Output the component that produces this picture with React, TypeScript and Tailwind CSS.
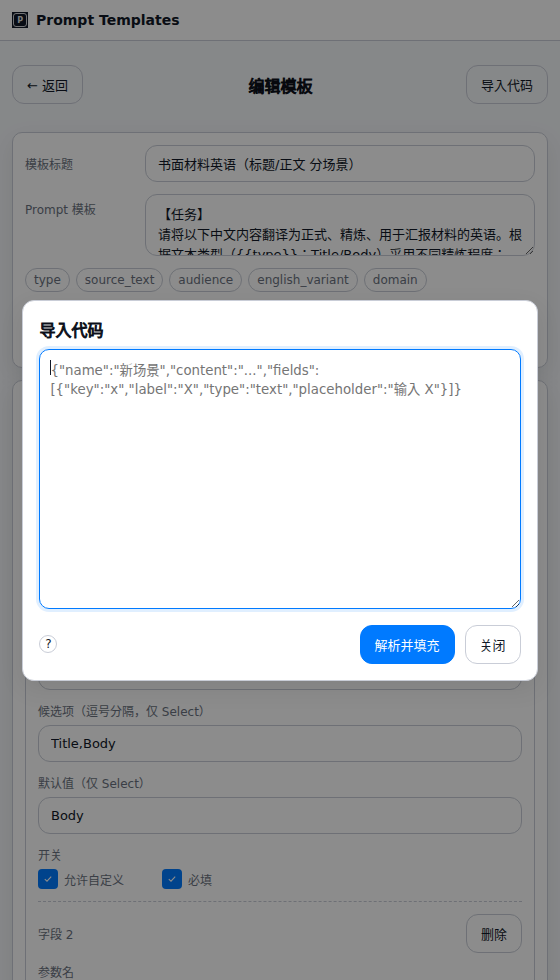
import type { ReactNode } from "react";

function Button({
  children,
  tone = "border-[#c9cdd7] text-[#111827]",
}: {
  children: ReactNode;
  tone?: string;
}) {
  return (
    <button
      className={`flex h-[39px] shrink-0 items-center justify-center whitespace-nowrap rounded-[12px] border px-[14px] pt-[3px] text-[13px] ${tone}`}
    >
      {children}
    </button>
  );
}

function Label({ children }: { children: ReactNode }) {
  return <div className="h-[17px] text-[12px] leading-[21px] text-[#6b7280]">{children}</div>;
}

function Field({ label, value }: { label: string; value: string }) {
  return (
    <div className="flex flex-col gap-1.5">
      <Label>{label}</Label>
      <input
        readOnly
        defaultValue={value}
        className="h-[37px] w-full rounded-[12px] border border-[#c9cdd7] bg-white px-3 text-[13px] outline-none"
      />
    </div>
  );
}

function Check({ label }: { label: string }) {
  return (
    <label className="flex w-[124px] items-center gap-1.5 text-[12px] text-[#6b7280]">
      <span className="flex h-5 w-5 items-center justify-center rounded-[4px] bg-[#007aff]">
        <svg width="8" height="8" viewBox="0 0 8 8" fill="none" stroke="white" strokeWidth="1.1">
          <path d="M0.8 4.2 3 6.2 7.2 1.6" />
        </svg>
      </span>
      <span className="pt-[3px]">{label}</span>
    </label>
  );
}

const chips = ["type", "source_text", "audience", "english_variant", "domain"];

export default function App() {
  return (
    <div className="relative h-[980px] w-full overflow-hidden bg-[#f5f7fa] font-['DejaVu_Sans','Noto_Sans_CJK_JP',sans-serif] text-[#111827]">
      <header className="flex h-[41px] items-center gap-2 border-b border-[#c9cdd7] bg-white px-3">
        <svg width="16" height="16" viewBox="0 0 16 16">
          <rect width="16" height="16" fill="#111827" />
          <rect x="1.5" y="1.5" width="13" height="13" rx="2.5" fill="none" stroke="white" strokeWidth="0.8" />
          <text x="8.2" y="11" textAnchor="middle" fontSize="8" fontWeight="700" fill="white" fillOpacity="0.9">P</text>
        </svg>
        <span className="text-[14px] font-bold">Prompt Templates</span>
      </header>

      <main className="flex flex-col px-3 pt-6">
        <div className="flex items-center justify-between">
          <Button>← 返回</Button>
          <h1 className="pl-[12px] pt-1 text-[16px] font-normal text-[#0b0f19] [-webkit-text-stroke:0.95px_#0b0f19]">编辑模板</h1>
          <Button>导入代码</Button>
        </div>

        <section className="mt-7 flex h-[236px] flex-col gap-3 rounded-[10px] border border-[#c9cdd7] bg-white p-3 shadow-[0_8px_24px_rgba(0,0,0,0.08)]">
          <div className="flex items-center">
            <div className="w-[120px] shrink-0 pt-0.5 text-[12px] text-[#6b7280]">模板标题</div>
            <input
              readOnly
              defaultValue="书面材料英语（标题/正文 分场景）"
              className="h-[37px] min-w-0 flex-1 rounded-[12px] border border-[#c9cdd7] px-3 text-[13px] outline-none"
            />
          </div>
          <div className="flex items-start">
            <div className="w-[120px] shrink-0 pt-[7px] text-[12px] text-[#6b7280]">Prompt 模板</div>
            <textarea
              readOnly
              defaultValue={"【任务】\n请将以下中文内容翻译为正式、精炼、用于汇报材料的英语。根据文本类型（{{type}}：Title/Body）采用不同精炼程度："}
              className="h-[62px] min-w-0 flex-1 resize-y overflow-hidden rounded-[12px] border border-[#c9cdd7] px-3 py-2.5 text-[13px] leading-5 outline-none"
            />
          </div>
          <div className="flex gap-1.5">
            {chips.map((c) => (
              <span key={c} className="flex h-6 items-center rounded-full border border-[#c9cdd7] px-2 text-[12px] text-[#6b7280]">
                {c}
              </span>
            ))}
          </div>
        </section>

        <section className="mt-3 h-[900px] shrink-0 rounded-[10px] border border-[#c9cdd7] bg-white p-3 shadow-[0_8px_24px_rgba(0,0,0,0.08)]">
          <div className="h-[31px]" />
          <div className="h-[820px] rounded-[10px] border border-[#c9cdd7] p-3">
            <div className="flex h-[39px] items-center justify-between text-[12px] text-[#6b7280]">
              <span className="pt-0.5">字段 1</span>
              <Button>删除</Button>
            </div>
            <div className="mt-2.5 flex flex-col gap-3">
              <Field label="参数名" value="type" />
              <Field label="显示名" value="类型" />
              <div className="h-[60px] rounded-[12px] border border-[#c9cdd7]" />
              <Field label="候选项（逗号分隔，仅 Select）" value="Title,Body" />
              <Field label="默认值（仅 Select）" value="Body" />
              <div className="flex flex-col gap-1.5">
                <Label>开关</Label>
                <div className="flex h-5">
                  <Check label="允许自定义" />
                  <Check label="必填" />
                </div>
              </div>
            </div>
            <div className="mt-3 flex items-center justify-between border-t border-dashed border-[#c9cdd7] pt-3 text-[12px] text-[#6b7280]">
              <span className="pt-0.5">字段 2</span>
              <Button>删除</Button>
            </div>
            <div className="mt-2.5">
              <Field label="参数名" value="source_text" />
            </div>
          </div>
        </section>
      </main>

      <div className="absolute inset-0 flex items-center justify-center bg-black/45">
        <div className="flex h-[381px] w-[92vw] flex-col rounded-[12px] border border-[#c9cdd7] bg-white p-4 shadow-[0_8px_24px_rgba(0,0,0,0.08)]">
          <h2 className="h-8 text-[16px] font-normal leading-[27px] text-[#0b0f19] [-webkit-text-stroke:0.95px_#0b0f19]">导入代码</h2>
          <div className="relative h-[260px]">
            <textarea
              readOnly
              placeholder={'{"name":"新场景","content":"...","fields":[{"key":"x","label":"X","type":"text","placeholder":"输入 X"}]}'}
              className="block h-[260px] w-full resize-y rounded-[10px] border border-[#007aff] px-2.5 pb-2.5 pt-[11px] text-[13.3333px] leading-[19px] shadow-[0_0_0_3px_rgba(0,122,255,0.12)] outline-none placeholder:text-[#757575]"
            />
            <span className="absolute left-[11px] top-[11px] h-[15px] w-px bg-[#111827]" />
          </div>
          <div className="mt-4 flex items-center gap-2.5">
            <span className="mr-auto flex h-[18px] w-[18px] items-center justify-center rounded-full border border-[#c9cdd7] text-[12px]">?</span>
            <Button tone="border-[#007aff] bg-[#007aff] text-white">解析并填充</Button>
            <Button>关闭</Button>
          </div>
        </div>
      </div>
    </div>
  );
}
